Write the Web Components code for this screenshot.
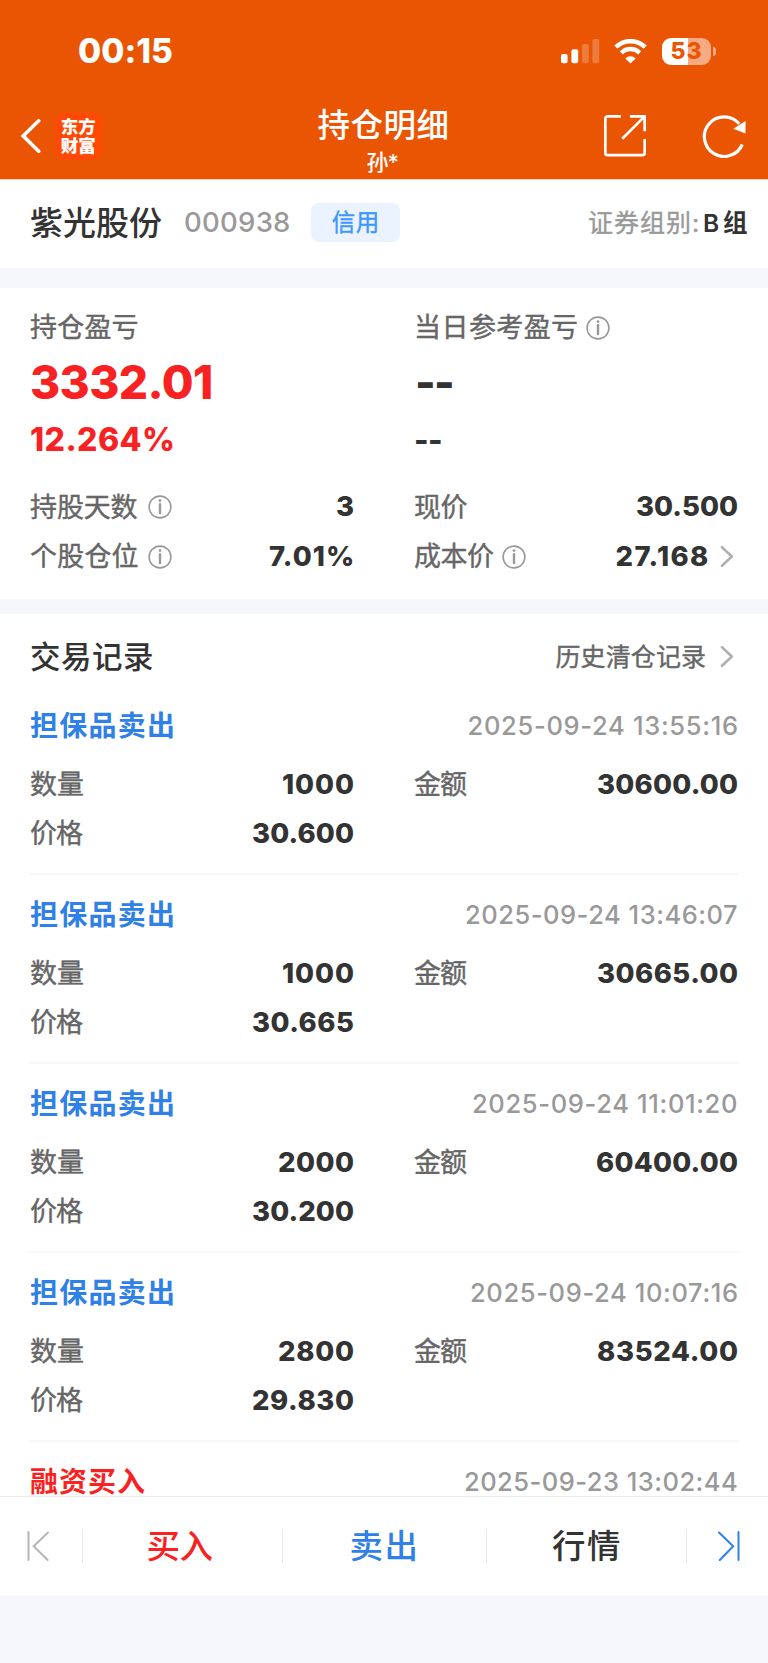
<!DOCTYPE html>
<html lang="zh-CN">
<head>
<meta charset="utf-8">
<title>持仓明细</title>
<style>
  html, body { margin: 0; background: #f6f7fa; }
  body { width: 768px; height: 1663px; overflow: hidden; font-family: Inter, "Noto Sans CJK SC", sans-serif; color: #333; }
</style>
</head>
<body>
<holding-page></holding-page>
<script>
const define = (name, html, setup) => {
  const tpl = document.createElement('template');
  tpl.innerHTML = html;
  customElements.define(name, class extends HTMLElement {
    connectedCallback() {
      if (this.shadowRoot) return;
      const root = this.attachShadow({ mode: 'open' });
      const copy = tpl.content.cloneNode(true);
      if (setup) setup(this, copy);
      root.appendChild(copy);
    }
  });
};

/* Text whose tracking is set so that its ink spans exactly w pixels. */
const ctx = document.createElement('canvas').getContext('2d');
define('fit-text', `<style>
  :host { display: block; white-space: pre; line-height: 1; flex: none; }
  span { display: block; width: max-content; }
</style><span></span>`, (el, root) => {
  const span = root.querySelector('span');
  const text = el.getAttribute('text');
  const size = +el.getAttribute('size');
  const weight = el.getAttribute('weight') || '400';
  const han = text.charCodeAt(0) > 0x3000;
  span.textContent = text;
  span.style.fontSize = size + 'px';
  span.style.fontWeight = weight;
  if (han && weight === '400') span.style.webkitTextStroke = '0.4px currentColor';
  ctx.font = `${weight} ${size}px Inter, "Noto Sans CJK SC", sans-serif`;
  const m = ctx.measureText(text);
  const ink = m.actualBoundingBoxLeft + m.actualBoundingBoxRight;
  const w = +el.getAttribute('w') || ink;
  const ls = text.length > 1 ? (w - ink) / (text.length - 1) : 0;
  span.style.letterSpacing = ls.toFixed(3) + 'px';
  /* Han glyphs keep their em-box bearing, so that stacked labels share one edge. */
  span.style.marginLeft = (han ? -0.9 : m.actualBoundingBoxLeft).toFixed(2) + 'px';
  span.style.marginRight = (m.actualBoundingBoxRight - m.width - ls).toFixed(2) + 'px';
});

define('info-icon', `<style>:host{display:block;flex:none;width:24px;height:24px}svg{display:block}</style>
<svg width="24" height="24" viewBox="0 0 24 24" fill="none" stroke="#999">
<circle cx="12" cy="12" r="10.9" stroke-width="1.6"/><circle cx="12" cy="5.6" r="1.4" fill="#999" stroke="none"/>
<path d="M12 9.3V18" stroke-width="2.4" stroke-linecap="round"/></svg>`);

define('go-icon', `<style>:host{display:block;flex:none;width:14px;height:22px}svg{display:block}</style>
<svg width="14" height="22" viewBox="0 0 14 22" fill="none" stroke="#b0b0b0" stroke-width="2.6" stroke-linecap="round" stroke-linejoin="round"><path d="M2 1.2 11.8 10.5 2 19.8"/></svg>`);

define('status-bar', `<style>
  :host { display: flex; box-sizing: border-box; height: 94px; padding: 9px 52px 0 79px; align-items: center; color: #fff; }
  .sp { flex: 1; }
  svg { display: block; }
  .time { margin-top: 1px; }
  .wifi { margin: 0 15px 0 14px; }
  .bat { display: flex; align-items: center; }
  .cell { width: 49px; height: 27px; border-radius: 9px; display: flex; align-items: center; justify-content: center; color: #ea5504;
    background: linear-gradient(90deg, #fff 26px, #f5aa81 26px); }
  .nub { width: 3px; height: 9px; margin-left: 2px; border-radius: 0 4px 4px 0; background: #f5aa81; }
</style>
<fit-text class="time" text="00:15" size="33.500" weight="800" w="93"></fit-text><div class="sp"></div>
<svg width="39" height="25" viewBox="0 0 39 25" fill="#fff"><rect x="0" y="15" width="6.6" height="9.3" rx="2"/><rect x="10.4" y="10.2" width="6.8" height="14.1" rx="2"/><g opacity=".22"><rect x="21" y="5" width="6.8" height="19.3" rx="2"/><rect x="31.4" y="0" width="6.8" height="24.3" rx="2"/></g></svg>
<svg class="wifi" width="33" height="25" viewBox="0 0 33 25" fill="none" stroke="#fff"><path d="M1.9 8.1a21 21 0 0 1 29.2 0" stroke-width="4.600"/><path d="M7.3 13.8a13.2 13.2 0 0 1 18.4 0" stroke-width="4.4"/><path d="M16.5 24.6 11.4 19.4a7.3 7.3 0 0 1 10.2 0Z" fill="#fff" stroke="none"/></svg>
<div class="bat"><div class="cell"><fit-text text="53" size="23" weight="800" w="30"></fit-text></div><div class="nub"></div></div>`);

define('nav-bar', `<style>
  :host { display: grid; grid-template-columns: 318px 131px 1fr; height: 85px; color: #fff; }
  .left { display: flex; align-items: center; padding: 0 0 1px 20px; }
  svg { display: block; flex: none; }
  .logo { width: 47px; height: 47px; margin-left: 14px; border-radius: 9px; background: #ff4a06; display: flex; flex-direction: column; align-items: center; justify-content: center; gap: 2px; }
  .mid { display: flex; flex-direction: column; align-items: center; padding: 12px 1px 0 0; }
  .mid div { display: flex; align-items: center; }
  .t { height: 41px; } .s { height: 26px; margin-top: 2px; }
  .right { display: flex; align-items: center; justify-content: flex-end; padding: 0 22px 1px 0; gap: 55px; }
</style>
<div class="left"><svg width="21" height="36" viewBox="0 0 21 36" fill="none" stroke="#fff" stroke-width="3.6" stroke-linecap="round" stroke-linejoin="miter"><path d="M18.7 2.8 3.2 17.9 18.7 33.2"/></svg>
<div class="logo"><fit-text text="东方" size="17.5" weight="900" w="34.500"></fit-text><fit-text text="财富" size="17.5" weight="900" w="34.500"></fit-text></div></div>
<div class="mid"><div class="t"><fit-text text="持仓明细" size="32.500" weight="500" w="130"></fit-text></div><div class="s"><fit-text text="孙*" size="22" weight="500" w="32"></fit-text></div></div>
<div class="right">
<svg width="44" height="44" viewBox="0 0 43 43" fill="none" stroke="#fff" stroke-width="2.6"><path d="M17.5 2.3H4.5a2.2 2.2 0 0 0-2.2 2.2V38a2.2 2.2 0 0 0 2.2 2.2H38.500a2.2 2.2 0 0 0 2.200-2.200V24.500"/><path d="M26.300 2.300H40.700V16.800M40.200 2.800 18.800 24.200"/></svg>
<svg width="44" height="44" viewBox="0 0 44 44" fill="none" stroke="#fff" stroke-width="3.200"><path d="M40.300 30.500A19.800 19.800 0 1 1 37.200 9.800"/><path d="M43.500 7V19.500L31.300 14.800Z" fill="#fff" stroke="none"/></svg>
</div>`);

define('stock-head', `<style>
  :host { display: flex; box-sizing: border-box; height: 88px; align-items: center; padding: 0 21px 3px 31px; background: #fff; }
  .code { color: #999; margin-left: 23px; }
  .name { margin-top: 1px; }
  .tag { width: 89px; height: 39px; border-radius: 8px; background: #eaf3ff; color: #3e96ff; margin-left: 22px; display: flex; align-items: center; justify-content: center; }
  .tag fit-text { margin: 1px 2px 0 0; }
  .sp { flex: 1; } .g { color: #999; margin-right: 6px; }
</style>
<fit-text class="name" text="紫光股份" size="33" weight="500" w="131"></fit-text>
<fit-text class="code" text="000938" size="27.500" weight="500" w="104"></fit-text>
<div class="tag"><fit-text text="信用" size="23.500" w="45"></fit-text></div>
<div class="sp"></div>
<fit-text class="g name" text="证券组别:" size="25" w="109"></fit-text>
<fit-text class="name" text="B 组" size="24.500" weight="600" w="43"></fit-text>`);

/* Label and optional info mark on the left, value on the right. */
define('data-cell', `<style>
  :host { display: flex; align-items: center; height: 49px; }
  .l { color: #666; } .sp { flex: 1; } info-icon { margin-left: 10px; } go-icon { margin: 0 3px 0 12px; }
</style>`, (el, root) => {
  const a = n => el.getAttribute(n);
  const d = document.createElement('template');
  d.innerHTML = `<fit-text class="l" text="${a('label')}" size="27" w="${a('lw')}"></fit-text>` +
    (el.hasAttribute('info') ? `<info-icon style="margin-left:${a('info') || 10}px"></info-icon>` : '') + '<div class="sp"></div>' +
    (a('value') ? `<fit-text text="${a('value')}" size="27.500" weight="800" w="${a('vw') || ''}"></fit-text>` : '') +
    (el.hasAttribute('go') ? '<go-icon></go-icon>' : '');
  root.appendChild(d.content);
});

define('profit-panel', `<style>
  :host { display: grid; box-sizing: border-box; height: 311px; margin-top: 20px; padding: 15px 31px 0; background: #fff;
    grid-template-columns: 322px 322px; column-gap: 62px; grid-template-rows: 49px 60px 54px 66px 49px; }
  .big, .mid { display: flex; align-items: center; }
  .red { color: #f82222; }
  .a { align-self: end; height: 50px; }
</style>
<data-cell label="持仓盈亏" lw="107.500"></data-cell><data-cell label="当日参考盈亏" lw="160" info="9"></data-cell>
<div class="big red"><fit-text text="3332.01" size="46" weight="800" w="180"></fit-text></div><div class="big"><fit-text style="margin:0 0 0 2px" text="--" size="44" weight="800" w="35"></fit-text></div>
<div class="mid red"><fit-text style="margin-top:1px" text="12.264%" size="32" weight="800" w="142"></fit-text></div><div class="mid"><fit-text style="margin:1px 0 0 1px" text="--" size="31" weight="800" w="25"></fit-text></div>
<data-cell class="a" label="持股天数" lw="107.500" value="3" info="10"></data-cell><data-cell class="a" label="现价" lw="52.500" value="30.500" vw="100"></data-cell>
<data-cell label="个股仓位" lw="107.500" value="7.01%" vw="84" info="10"></data-cell><data-cell label="成本价" lw="80" value="27.168" vw="91.500" info="8" go></data-cell>`);

define('trade-record', `<style>
  :host { display: block; box-sizing: border-box; height: 189px; padding-top: 15px; border-bottom: 2px solid #f7f7f7; }
  .top { display: flex; height: 50px; align-items: center; justify-content: space-between; margin-bottom: 9px; padding: 0 1px; }
  .buy { color: #f82222; } .sell { color: #2f80e7; } .d { color: #999; margin-bottom: 1px; }
  .grid { display: grid; grid-template-columns: 322px 322px; column-gap: 62px; padding: 0 1px; }
</style>`, (el, root) => {
  const [type, tw, date, dw, qty, qw, amt, aw, price, pw] = el.getAttribute('data').split('|');
  const d = document.createElement('template');
  d.innerHTML = `<div class="top"><fit-text class="${type.includes('买入') ? 'buy' : 'sell'}" text="${type}" size="28" weight="700" w="${tw}"></fit-text>
    <fit-text class="d" text="${date}" size="25.500" weight="500" w="${dw}"></fit-text></div>` +
    (qty ? `<div class="grid"><data-cell label="数量" lw="52" value="${qty}" vw="${qw}"></data-cell>
    <data-cell label="金额" lw="53" value="${amt}" vw="${aw}"></data-cell>
    <data-cell label="价格" lw="53" value="${price}" vw="${pw}"></data-cell></div>` : '');
  root.appendChild(d.content);
});

define('trade-list', `<style>
  :host { display: block; box-sizing: border-box; height: 882px; margin-top: 15px; padding: 0 30px; background: #fff; }
  .head { display: flex; box-sizing: border-box; height: 72px; padding: 13px 1px 0; align-items: center; justify-content: space-between; }
  .head > fit-text, .more fit-text { margin-top: 1px; }
  .more { display: flex; align-items: center; color: #666; } go-icon { margin: 0 3px 0 15px; }
  .last { height: 53px; border: 0; }
</style>
<div class="head"><fit-text text="交易记录" size="30.500" weight="500" w="122"></fit-text><div class="more"><fit-text text="历史清仓记录" size="25" w="149.500"></fit-text><go-icon></go-icon></div></div>
<trade-record data="担保品卖出|143|2025-09-24 13:55:16|268.5|1000|70|30600.00|139|30.600|100"></trade-record>
<trade-record data="担保品卖出|143|2025-09-24 13:46:07|271|1000|70|30665.00|139|30.665|100"></trade-record>
<trade-record data="担保品卖出|143|2025-09-24 11:01:20|264|2000|74|60400.00|140|30.200|100"></trade-record>
<trade-record data="担保品卖出|143|2025-09-24 10:07:16|266|2800|74|83524.00|139|29.830|100"></trade-record>
<trade-record class="last" data="融资买入|114|2025-09-23 13:02:44|272"></trade-record>`);

define('action-bar', `<style>
  :host { display: grid; box-sizing: border-box; height: 99px; border-top: 1px solid #ededed; background: #fff; align-items: center;
    grid-template-columns: 83px 200px 204px 200px 1fr; padding-bottom: 1px; }
  div { display: flex; height: 34px; align-items: center; justify-content: center; box-sizing: border-box; border-right: 1px solid #e9e9e9; }
  .n { border: 0; justify-content: flex-start; padding-left: 31px; }
  .p { justify-content: flex-start; padding-left: 26px; }
  fit-text { margin-top: 3px; }
  .b { color: #f82222; padding-right: 5px; } .s { color: #2f80e7; padding-right: 3px; }
</style>
<div class="p"><svg width="24" height="32" viewBox="0 0 24 32" fill="none" stroke="#b5b5b5" stroke-width="2" stroke-linecap="round"><path d="M2.500 2V30"/><path d="M22 2.500 7.700 16.300 21.700 30"/></svg></div>
<div class="b"><fit-text text="买入" size="33.500" weight="500" w="65"></fit-text></div>
<div class="s"><fit-text text="卖出" size="33.500" weight="500" w="64"></fit-text></div>
<div><fit-text text="行情" size="33.500" weight="500" w="68"></fit-text></div>
<div class="n"><svg width="24" height="32" viewBox="0 0 24 32" fill="none" stroke="#2f80e7" stroke-width="2" stroke-linecap="round"><path d="M20.500 2V30"/><path d="M1 2.500 15.200 16.200 1.800 30"/></svg></div>`);

define('holding-page', `<style>
  :host { display: block; }
  header { background: #ea5504; border-bottom: 1px solid #f9cfb6; }
</style>
<header><status-bar></status-bar><nav-bar></nav-bar></header>
<stock-head></stock-head><profit-panel></profit-panel><trade-list></trade-list><action-bar></action-bar>`);
</script>
</body>
</html>
